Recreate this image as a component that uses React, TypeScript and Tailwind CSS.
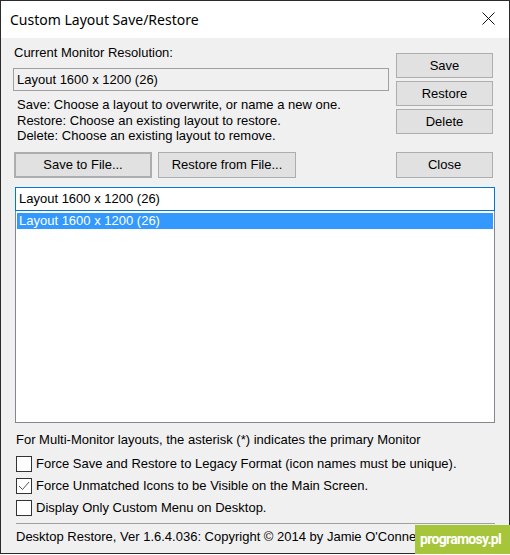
import React from "react";

const body = { fontFamily: '"Liberation Sans", Arial, sans-serif' };

function WinButton({ label, className = "" }: { label: string; className?: string }) {
  return (
    <button
      className={`flex items-center justify-center bg-[#e1e1e1] border border-[#adadad] text-[13px] text-black ${className}`}
    >
      {label}
    </button>
  );
}

function CheckRow({ label, checked }: { label: string; checked?: boolean }) {
  return (
    <div className="flex items-center h-[22px]">
      <span className="w-[16px] h-[16px] border border-[#333333] bg-white flex items-center justify-center shrink-0">
        {checked && (
          <svg width="14" height="14" viewBox="0 0 14 14">
            <polyline points="2,7 5.5,10.5 12,3" fill="none" stroke="#555555" strokeWidth="1" />
          </svg>
        )}
      </span>
      <span className="ml-[4px]">{label}</span>
    </div>
  );
}

export default function App() {
  return (
    <div className="relative w-[510px] h-[555px] overflow-hidden bg-white">
      <div className="w-[510px] h-[554px] border border-[#2b2b2b] bg-[#f0f0f0] flex flex-col text-[13px] text-black" style={body}>
        {/* Title bar */}
        <div className="h-[37px] bg-white flex items-center justify-between pl-[9px] pr-[14px] shrink-0">
          <span className="text-[14px] text-[#000000]" style={{ fontFamily: '"Noto Sans", sans-serif' }}>
            Custom Layout Save/Restore
          </span>
          <svg width="13" height="13" viewBox="0 0 13 13" className="mb-[2px]">
            <line x1="0.5" y1="0.5" x2="12.5" y2="12.5" stroke="#111" strokeWidth="1" />
            <line x1="12.5" y1="0.5" x2="0.5" y2="12.5" stroke="#111" strokeWidth="1" />
          </svg>
        </div>

        <div className="pl-[12px] flex flex-col">
          {/* Top section */}
          <div className="flex mt-[7px]">
            <div className="w-[376px] flex flex-col">
              <div className="h-[16px] leading-[16px] pl-[1px]">Current Monitor Resolution:</div>
              <div className="mt-[7px] h-[23px] border border-[#a0a0a0] bg-[#f0f0f0] flex items-center pl-[3px]">
                Layout 1600 x 1200 (26)
              </div>
              <div className="mt-[6px] pl-[4px] leading-[15.5px]">
                <div>Save: Choose a layout to overwrite, or name a new one.</div>
                <div>Restore: Choose an existing layout to restore.</div>
                <div>Delete: Choose an existing layout to remove.</div>
              </div>
            </div>
            <div className="ml-[7px] w-[97px] flex flex-col gap-[3px] pt-[8px]">
              <WinButton label="Save" className="h-[25px]" />
              <WinButton label="Restore" className="h-[25px]" />
              <WinButton label="Delete" className="h-[25px]" />
            </div>
          </div>

          {/* File buttons row */}
          <div className="flex mt-[8px] h-[26px]">
            <WinButton label="Save to File..." className="ml-[1px] w-[138px] border-2 border-[#0078d7]" />
            <WinButton label="Restore from File..." className="ml-[6px] w-[138px]" />
            <WinButton label="Close" className="ml-[100px] w-[97px]" />
          </div>

          {/* Combo + list */}
          <div className="ml-[2px] mt-[9px] w-[480px] h-[24px] border border-[#0078d7] bg-white flex items-center pl-[3px]">
            Layout 1600 x 1200 (26)
          </div>
          <div className="ml-[2px] w-[480px] h-[212px] border border-[#828790] border-t-0 bg-white pt-[2px] px-[1px]">
            <div className="h-[16px] bg-[#3399ff] text-white flex items-center pl-[2px]">Layout 1600 x 1200 (26)</div>
          </div>

          <div className="ml-[3px] mt-[9px] h-[16px] leading-[16px]">
            For Multi-Monitor layouts, the asterisk (*) indicates the primary Monitor
          </div>
          <div className="ml-[3px] mt-[5px] flex flex-col">
            <CheckRow label="Force Save and Restore to Legacy Format (icon names must be unique)." />
            <CheckRow label="Force Unmatched Icons to be Visible on the Main Screen." checked />
            <CheckRow label="Display Only Custom Menu on Desktop." />
          </div>
          <div className="ml-[3px] mt-[4px] w-[479px] border-t border-[#a0a0a0]" />
          <div className="ml-[3px] mt-[5px] h-[16px] leading-[16px]">
            Desktop Restore, Ver 1.6.4.036: Copyright © 2014 by Jamie O'Connell
          </div>
        </div>
      </div>

      {/* watermark */}
      <div
        className="absolute left-[415px] top-[525px] w-[95px] h-[29px] bg-[#a6c53a] text-white text-[14px] font-bold tracking-[-0.7px] flex items-center justify-center pr-[4px]"
        style={{ fontFamily: 'Roboto, "Liberation Sans", sans-serif' }}
      >
        programosy.pl
      </div>
    </div>
  );
}
